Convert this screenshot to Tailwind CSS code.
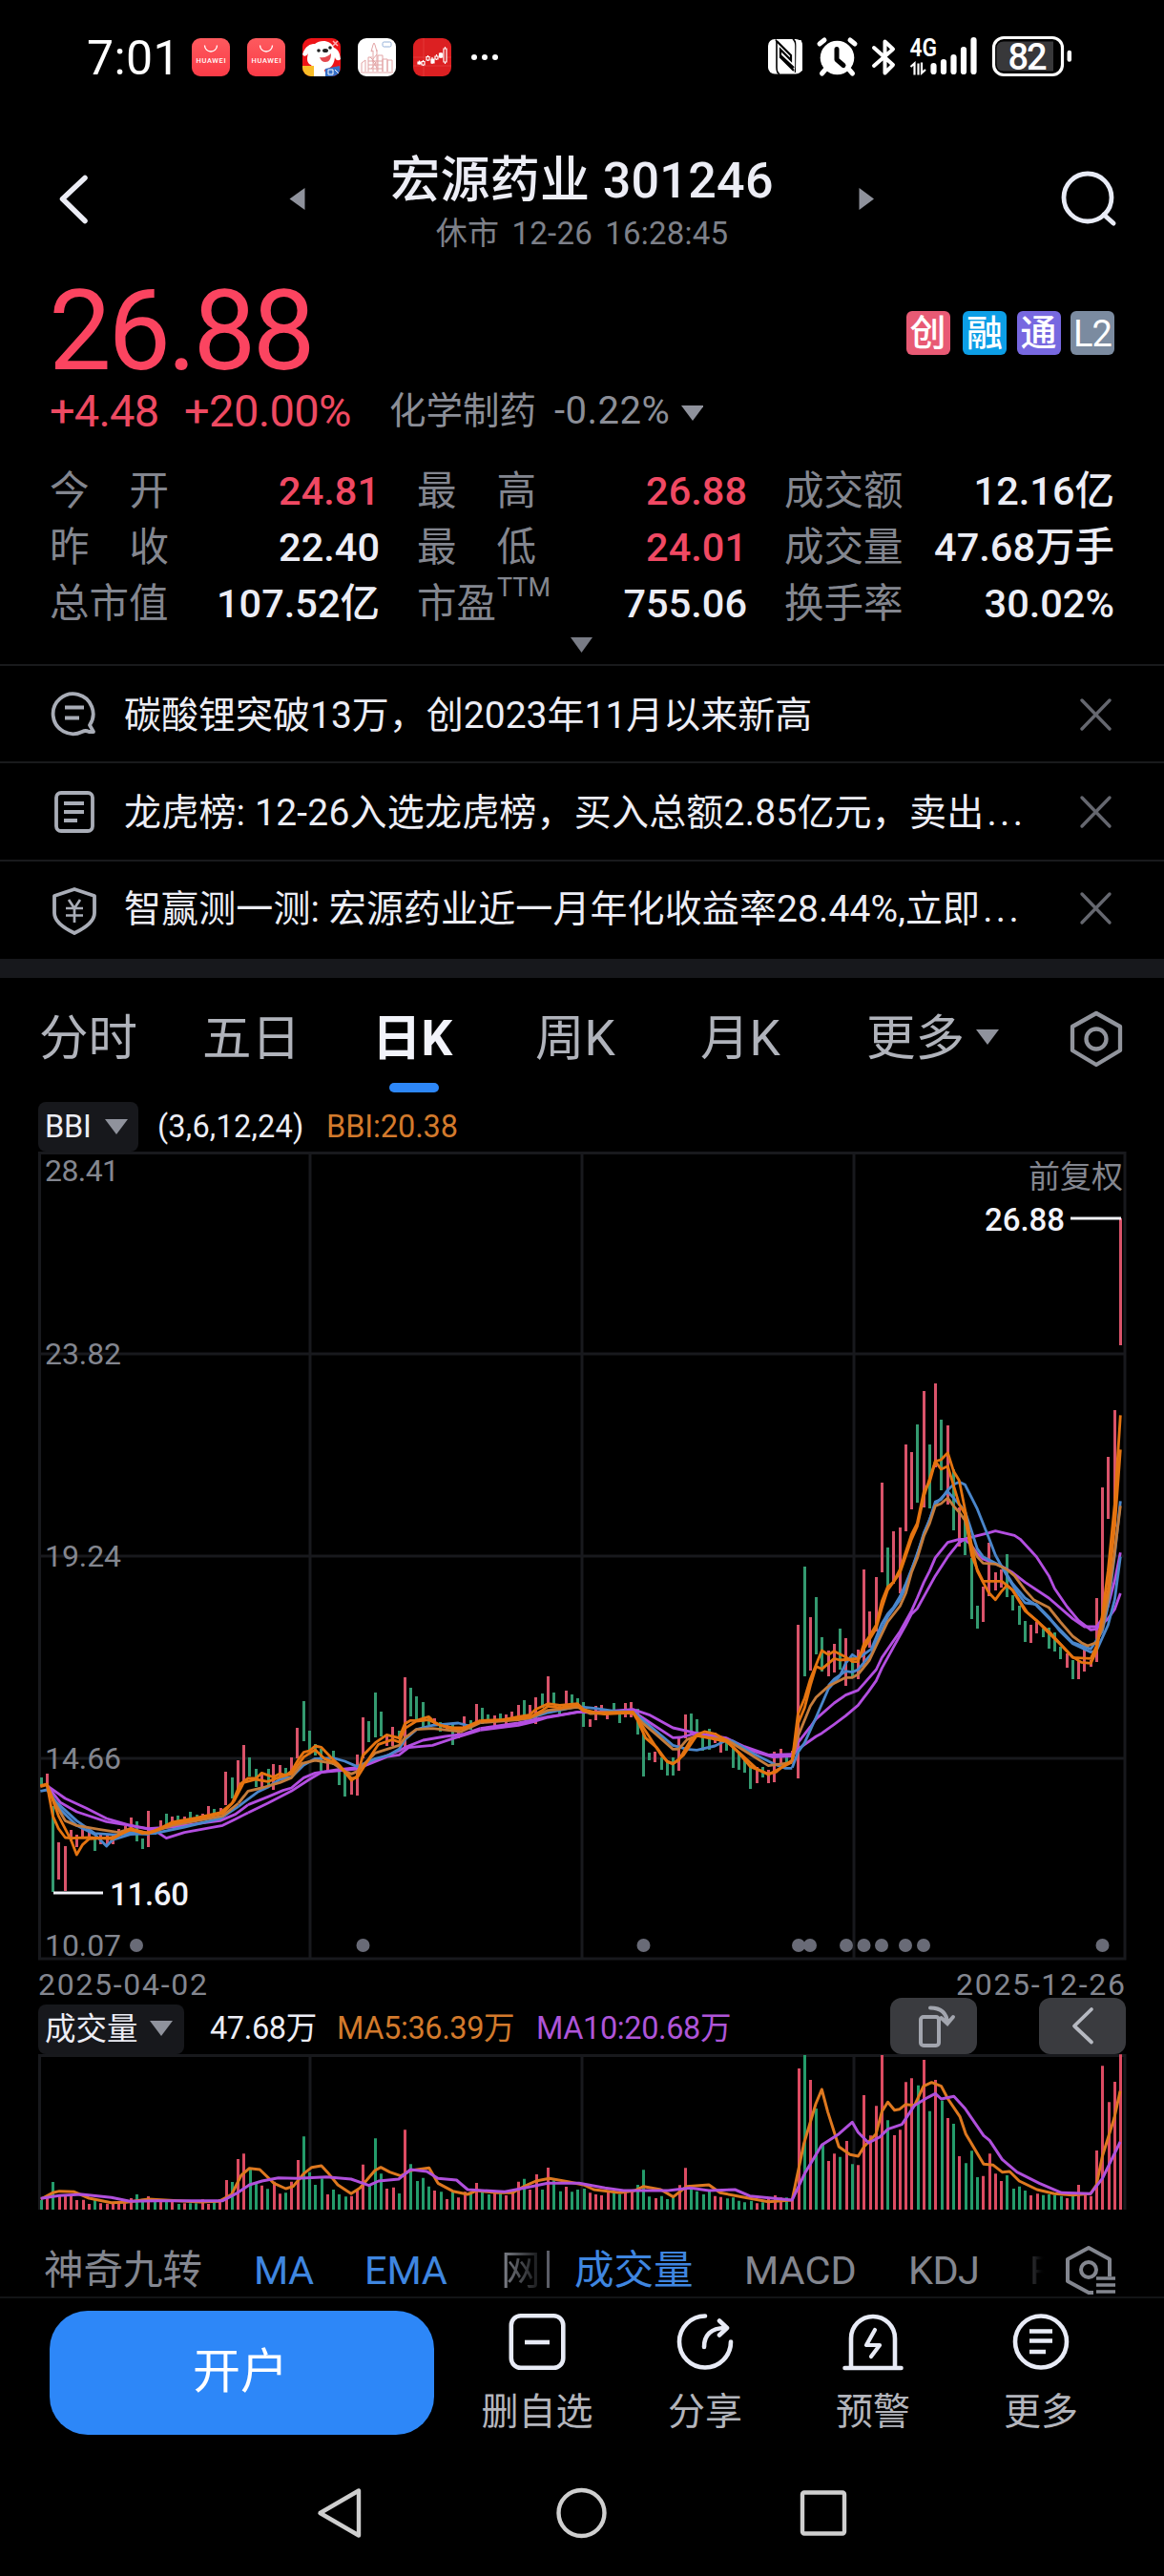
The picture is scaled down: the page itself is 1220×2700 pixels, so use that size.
<!DOCTYPE html>
<html lang="zh-CN">
<head>
<meta charset="utf-8">
<title>宏源药业 301246</title>
<script src="https://cdn.jsdelivr.net/npm/@tailwindcss/browser@4"></script>
</head>
<body class="bg-black">
<div class="w-[1220px] h-[2700px] overflow-hidden bg-black text-[#ecedf5] font-[Roboto,'Noto_Sans_CJK_SC',sans-serif] whitespace-nowrap flex flex-col">

  <!-- status bar -->
  <div class="h-[122px] shrink-0 flex items-center">
    <div class="w-[201px] pl-[91px] text-[50px] leading-[60px] text-white tracking-[.4px]">7:01</div>
    <svg class="w-[1019px] h-[122px]" viewBox="201 0 1019 122">
      <defs>
        <linearGradient id="hw" x1="0" y1="0" x2="0" y2="1"><stop offset="0" stop-color="#fd5a5e"/><stop offset="1" stop-color="#fb3b47"/></linearGradient>
        <clipPath id="jd"><rect x="317" y="40" width="40" height="40" rx="9"/></clipPath>
      </defs>
      <g>
        <rect x="201" y="40" width="40" height="40" rx="9" fill="url(#hw)"/>
        <path d="M214.500 47.500a6.500 6.500 0 0 0 13 0" fill="none" stroke="#fff" stroke-width="1.300"/>
        <text x="221" y="66" font-size="7.500" font-weight="500" fill="#fff" text-anchor="middle" textLength="31">HUAWEI</text>
        <rect x="259" y="40" width="40" height="40" rx="9" fill="url(#hw)"/>
        <path d="M272.500 47.500a6.500 6.500 0 0 0 13 0" fill="none" stroke="#fff" stroke-width="1.300"/>
        <text x="279" y="66" font-size="7.500" font-weight="500" fill="#fff" text-anchor="middle" textLength="31">HUAWEI</text>
      </g>
      <g clip-path="url(#jd)">
        <rect x="317" y="40" width="40" height="40" fill="#ee1418"/>
        <path d="M349 43l5 5M354 43l-5 5" stroke="#ffb0b5" stroke-width="1.500"/>
        <path d="M317 57c3-9 8-11 13-11 6-5 17-4 20 4 5 2 6 6 7 12-2 2-5 2-6-2-1 10-6 12-11 13l2 7h-13c0-6-1-9-3-12-4-1-5-6-3-12-2 3-4 4-6 1z" fill="#fff"/>
        <path d="M335 60c5 1 9-1 12-4 0 6-2 9-6 9-3 0-5-2-6-5z" fill="#e5474d"/>
        <circle cx="334" cy="53" r="1.800" fill="#222"/><circle cx="346" cy="50" r="1.800" fill="#222"/><ellipse cx="341" cy="53" rx="3" ry="2" fill="#222"/>
        <path d="M317 69h12v11h-12z" fill="#f9bd27"/><path d="M341 72l15-3 1 11h-16z" fill="#3670c8"/>
        <path d="M344 73h5v5h-5zM351 73l4 4" fill="none" stroke="#fff" stroke-width="1"/>
      </g>
      <rect x="375" y="40" width="40" height="40" rx="9" fill="#fff"/>
      <g fill="none" stroke="#e3a5a6" stroke-width="1">
        <path d="M391 75V53l-2 1 2-7 1-2 1 2 2 7M395 52v23M386 75V60h4M379 75v-9l4-3v12M396 75V58h5v17M401 75V62h5v13M406 75V63h5v12M378 76h34M386 64h15M386 68h15M386 72h15M388 60l6 6-5 6M395 57l-5 6 5 8"/>
      </g>
      <rect x="401" y="44" width="9" height="5" rx="1.500" fill="none" stroke="#93b0d8" stroke-width="1"/>
      <rect x="433" y="40" width="40" height="40" rx="9" fill="#dc2022"/>
      <path d="M444 40v40M433 69h40M433 60h40" stroke="#e94a4a" stroke-width=".6"/>
      <g stroke="#fff" stroke-width="1.200" fill="none">
        <path d="M439.500 63.500v4M443.500 63v6M448.500 58v6M453 60v7M457.500 57v6M462 55v6M466.500 49v18"/>
        <path d="M438 65h3v2h-3zM452 62h3v4h-3zM460.500 56h3v4h-3z" fill="#fff"/>
        <path d="M442 64.500h3v3.500h-3zM447 59.500h3v3.500h-3zM456 59h3v3h-3zM465 51h3v14h-3z" fill="#dc2022"/>
      </g>
      <g fill="#fff"><circle cx="497" cy="60" r="3"/><circle cx="508" cy="60" r="3"/><circle cx="519" cy="60" r="3"/></g>
      <!-- nfc -->
      <rect x="805" y="41" width="36" height="36.500" rx="7" fill="#fff"/>
      <path d="M813 41.500l1 2v27q0 6 3 7M831 41q3 2 3 7v22l-.5 6" fill="none" stroke="#000" stroke-width="1.600"/>
      <path d="M814 43l15 15v5L818 52v8l14 14M818 58l14 13" fill="none" stroke="#000" stroke-width="2.200"/>
      <path d="M834.600 42l5 0c2 4 1.400 8 1.400 12v20l-5 3h-2z" fill="#fff"/>
      <!-- alarm -->
      <circle cx="877.500" cy="60.500" r="17.800" fill="#fff"/>
      <path d="M859 46l5-4M896 46l-5-4M865 73l-3.500 4M890 73l3.500 4" stroke="#fff" stroke-width="5" stroke-linecap="round"/>
      <path d="M877 51.500v11l7 6" stroke="#000" stroke-width="5" fill="none" stroke-linecap="round" stroke-linejoin="round"/>
      <!-- bluetooth -->
      <path d="M916 50l20 18-8.500 8.500v-33L936 51.500 916 69" fill="none" stroke="#fff" stroke-width="4" stroke-linecap="round" stroke-linejoin="round"/>
      <text x="953.500" y="59" font-size="26" font-weight="600" fill="#fff" textLength="28.500" lengthAdjust="spacingAndGlyphs">4G</text>
      <path d="M954.500 70l4-3.500v12M970 73l-4 3.500v-11M962.500 66.500v12" fill="none" stroke="#fff" stroke-width="2.200"/>
      <path d="M978.500 69v6M989 65v10M999.500 60v15M1010 52v23M1020.500 42v33" stroke="#fff" stroke-width="6.200" stroke-linecap="round"/>
      <rect x="1041.500" y="39.500" width="72" height="39" rx="10.500" fill="#000" stroke="#fff" stroke-width="3.200"/>
      <path d="M1052 43.500h52v31h-52q-7.500 0-7.500-7.500v-16q0-7.500 7.500-7.500z" fill="#38383a"/>
      <text x="1077" y="73" font-size="38" font-weight="500" fill="#fff" text-anchor="middle" textLength="41">82</text>
      <path d="M1120.800 55v7.500" stroke="#fff" stroke-width="4.500" stroke-linecap="round"/>
    </svg>
  </div>

  <!-- title bar -->
  <div class="h-[166px] shrink-0 grid grid-cols-[300px_620px_300px]">
    <svg class="w-[300px] h-[166px]" viewBox="0 122 300 166"><path d="M89 186.500L65.500 208.500 89 231.500" fill="none" stroke="#ecedf5" stroke-width="5.500" stroke-linecap="round" stroke-linejoin="round"/></svg>
    <div class="flex justify-between">
      <svg class="w-[24px] h-[166px]" viewBox="300 122 24 166"><path d="M303.500 208.500L319.500 197v23z" fill="#8f929c"/></svg>
      <div class="flex flex-col items-center pt-[38px]">
        <div class="text-[52px] leading-[60px] font-medium tracking-[.3px]">宏源药业 301246</div>
        <div class="text-[33px] leading-[40px] mt-[5px] text-[#7d8089] tracking-[.2px] [word-spacing:5px]">休市 12-26 16:28:45</div>
      </div>
      <svg class="w-[24px] h-[166px]" viewBox="896 122 24 166"><path d="M916 208.500L900.500 197v23z" fill="#8f929c"/></svg>
    </div>
    <svg class="w-[300px] h-[166px]" viewBox="920 122 300 166"><circle cx="1140" cy="207" r="25" fill="none" stroke="#e8ebf6" stroke-width="4.800"/><path d="M1157 225l10 9" stroke="#e8ebf6" stroke-width="5" stroke-linecap="round"/></svg>
  </div>

  <!-- price -->
  <div class="h-[117px] shrink-0 flex justify-between pl-[51px] pr-[52px]">
    <div class="text-[117px] leading-[118px] text-[#fb4460] tracking-[-3.6px]">26.88</div>
    <div class="flex gap-[10.500px] mt-[38px] text-[38px] leading-[46px] text-white text-center font-medium">
      <div class="w-[46px] h-[46px] rounded-md bg-[#e85a74] mr-[3px]">创</div>
      <div class="w-[46px] h-[46px] rounded-md bg-[#0c9ee6]">融</div>
      <div class="w-[46px] h-[46px] rounded-md bg-[#7768e0]">通</div>
      <div class="w-[46px] h-[46px] rounded-md bg-[#7b8ba0] tracking-[-1px] font-normal leading-[49px]">L2</div>
    </div>
  </div>
  <div class="h-[80px] shrink-0 grid grid-cols-[141px_215px_173px_132px_40px] pl-[52px] text-[40px] leading-[52px] text-[#8b8e97]">
    <div class="text-[47px] text-[#ee4a62] tracking-[-.8px]">+4.48</div>
    <div class="text-[47px] text-[#ee4a62] tracking-[-.6px]">+20.00%</div>
    <div class="text-[38.500px]">化学制药</div>
    <div class="tracking-[.5px]">-0.22%</div>
    <svg class="w-[24px] h-[52px]" viewBox="0 0 24 52"><path d="M1 20h24L13 36z" fill="#8f929c"/></svg>
  </div>

  <!-- statistics -->
  <div class="h-[177px] shrink-0 grid grid-cols-[346px_346px_346px] gap-x-[39px] pl-[52px] text-[41.500px] leading-[59px] font-medium">
    <div class="flex justify-between"><span class="w-[125px] flex justify-between font-normal text-[#83868f]"><span>今</span><span>开</span></span><span class="text-[#f04963]">24.81</span></div>
    <div class="flex justify-between"><span class="w-[125px] flex justify-between font-normal text-[#83868f]"><span>最</span><span>高</span></span><span class="text-[#f04963]">26.88</span></div>
    <div class="flex justify-between"><span class="font-normal text-[#83868f]">成交额</span><span>12.16亿</span></div>
    <div class="flex justify-between"><span class="w-[125px] flex justify-between font-normal text-[#83868f]"><span>昨</span><span>收</span></span><span>22.40</span></div>
    <div class="flex justify-between"><span class="w-[125px] flex justify-between font-normal text-[#83868f]"><span>最</span><span>低</span></span><span class="text-[#f04963]">24.01</span></div>
    <div class="flex justify-between"><span class="font-normal text-[#83868f]">成交量</span><span>47.68万手</span></div>
    <div class="flex justify-between"><span class="font-normal text-[#83868f]">总市值</span><span>107.52亿</span></div>
    <div class="flex justify-between"><span class="font-normal text-[#83868f] flex">市盈<span class="text-[27px] leading-[26px] ml-[1px]">TTM</span></span><span>755.06</span></div>
    <div class="flex justify-between"><span class="font-normal text-[#83868f]">换手率</span><span>30.02%</span></div>
  </div>
  <div class="h-[34px] shrink-0 flex justify-center"><svg class="w-[24px] h-[34px]" viewBox="0 0 24 34"><path d="M0 6h23L11.500 22z" fill="#797c86"/></svg></div>

  <!-- notices -->
  <div class="shrink-0 h-[309px] flex flex-col text-[39px] leading-[52px]">
    <div class="h-[102px] border-t-2 border-[#191a1c] flex items-center pt-[3px]">
      <svg class="w-[130px] h-[60px]" viewBox="0 719 130 60" fill="none" stroke="#a9adb7" stroke-width="3.800" stroke-linecap="round" stroke-linejoin="round"><path d="M98 766l-4-7a21 21 0 1 0-8 7q4-2 7 0z"/><path d="M68 740.500h20M68 751.500h15" stroke-linecap="butt"/></svg>
      <div class="w-[1001px]">碳酸锂突破13万，创2023年11月以来新高</div>
      <svg class="w-[36px] h-[60px]" viewBox="0 0 36 60"><path d="M3 14l29 30M32 14L3 44" stroke="#65676f" stroke-width="3.400" stroke-linecap="round"/></svg>
    </div>
    <div class="h-[103px] border-t-2 border-[#191a1c] flex items-center pt-[3px]">
      <svg class="w-[130px] h-[60px]" viewBox="0 822 130 60" fill="none" stroke="#a9adb7" stroke-width="3.800"><rect x="59" y="831" width="38" height="40" rx="5"/><path d="M67 842h21M67 851h21M67 860h14"/></svg>
      <div class="w-[1001px] tracking-[.2px]">龙虎榜: 12-26入选龙虎榜，买入总额2.85亿元，卖出<span class="tracking-[3.400px] ml-[3px]">...</span></div>
      <svg class="w-[36px] h-[60px]" viewBox="0 0 36 60"><path d="M3 14l29 30M32 14L3 44" stroke="#65676f" stroke-width="3.400" stroke-linecap="round"/></svg>
    </div>
    <div class="h-[104px] border-t-2 border-[#191a1c] flex items-center pb-[3px]">
      <svg class="w-[130px] h-[60px]" viewBox="0 922 130 60" fill="none" stroke="#a9adb7" stroke-width="3.800" stroke-linejoin="round"><path d="M78 931l21 7v18q0 11-21 21-21-10-21-21v-18z"/><path d="M72 942l6 9 6-9M78 951v15M69 951h18M69 958.500h18" stroke-width="2.700"/></svg>
      <div class="w-[1001px] tracking-[.1px]">智赢测一测: 宏源药业近一月年化收益率28.44%,立即<span class="tracking-[3.400px] ml-[3px]">...</span></div>
      <svg class="w-[36px] h-[60px]" viewBox="0 0 36 60"><path d="M3 14l29 30M32 14L3 44" stroke="#65676f" stroke-width="3.400" stroke-linecap="round"/></svg>
    </div>
  </div>
  <div class="h-[20px] shrink-0 bg-[#17181c]"></div>

  <!-- period tabs -->
  <div class="h-[130px] shrink-0 grid grid-cols-[171px_178px_171px_173px_174px_110px_100px_80px] pl-[41px] pt-[34px] text-[51.500px] leading-[60px] text-[#b0b3bb]">
    <div>分时</div><div>五日</div>
    <div class="text-[#f2f3fa] font-bold flex flex-col"><span>日K</span><span class="w-[52px] h-[10px] rounded-full bg-[#2d87f8] mt-[16px] ml-[18px]"></span></div>
    <div>周K</div><div>月K</div><div>更多</div>
    <svg class="w-[30px] h-[60px]" viewBox="1018 1059 30 60"><path d="M1023 1079h24l-12 16z" fill="#8f929c"/></svg>
    <svg class="w-[60px] h-[64px]" viewBox="1118 1059 60 64" fill="none" stroke="#91949c" stroke-width="4.300" stroke-linejoin="round"><path d="M1149 1062l25 14v25l-25 15-25-15v-25z"/><circle cx="1149" cy="1089" r="10.500"/></svg>
  </div>

  <!-- indicator caption -->
  <div class="h-[52px] shrink-0 flex items-center pl-[40px] text-[32.500px] leading-[52px]">
    <div class="w-[105px] h-[52px] rounded-lg bg-[#17181c] flex items-center pl-[7px]"><span class="w-[62px] tracking-[-.3px]">BBI</span><svg class="w-[26px] h-[52px]" viewBox="0 0 26 52"><path d="M1 18h24L13 34z" fill="#8f929c"/></svg></div>
    <div class="ml-[20px] w-[177px] tracking-[.2px]">(3,6,12,24)</div>
    <div class="text-[#d37a2c] tracking-[-.1px]">BBI:20.38</div>
  </div>

  <!-- candlestick chart -->
  <svg id="kline" class="w-[1220px] h-[894px] shrink-0" viewBox="0 1207 1220 894" font-size="32">
    <path d="M41.500 1208.500H1179v844.500H41.500zM325 1209V2053M610 1209V2053M895 1209V2053M42 1419H1179M42 1631H1179M42 1843H1179" fill="none" stroke="#18191d" stroke-width="3"/>
    <g fill="#83868f">
      <text x="47" y="1238" textLength="78">28.41</text><text x="47" y="1430" textLength="80">23.82</text><text x="47" y="1642" textLength="80">19.24</text><text x="47" y="1854" textLength="80">14.66</text><text x="47" y="2050" textLength="80">10.07</text>
      <text x="1177" y="1245" font-size="33" text-anchor="end">前复权</text>
      <text x="40" y="2091" textLength="177">2025-04-02</text><text x="1002" y="2091" textLength="177">2025-12-26</text>
    </g>
    <g id="candles" stroke-width="3" fill="none"></g>
    <g fill="none" stroke-width="8.500" stroke-linejoin="round">
      <g transform="translate(30 1800) scale(.33333)">
        <g stroke="#b34ee0"><polyline points="58,215 115,255 180,285 245,318 320,340 376,350 451,345 527,335 602,325 650,305 690,275"/><polyline points="58,215 100,268 151,297 245,328 320,340 396,355 433,380 490,362 610,340 650,320 690,300"/></g>
        <g stroke="#4a86cb"><polyline points="37,232 58,228 85,265 151,325 208,365 283,370 320,362 376,368"/><polyline points="58,222 100,290 151,340 208,368 245,405 264,385 320,368 396,365 490,345 602,318 660,280"/></g>
        <polyline stroke="#c47c3c" points="58,215 80,265 115,325 151,340 220,352 283,362 320,350 376,365 451,340 530,325 610,310 660,270"/>
        <g stroke="#e57410"><polyline points="37,218 58,212 76,310 94,350 115,378 133,380 190,378 264,382 320,350 358,365 396,358 451,330 527,316 602,300 640,270"/><polyline points="37,215 58,210 94,310 133,385 151,432 170,400 190,382 264,378 320,354 376,364 451,335 530,320 610,302 645,265"/></g>
      </g>
      <g transform="translate(220 1740) scale(.33333)">
        <g stroke="#b34ee0"><polyline points="120,455 182,430 230,410 256,402 295,370 331,355 400,345 463,338 520,315 595,285 613,275 670,252 740,240 800,232 850,215"/><polyline points="120,480 182,450 256,412 313,375 350,353 463,342 560,303 595,298 625,275 700,268 760,248 850,220"/></g>
        <polyline stroke="#4a86cb" points="90,460 150,415 182,400 220,375 256,368 295,330 331,310 388,308 424,318 463,335 520,310 560,300 595,280 613,250 650,218 700,205 781,198 820,208 850,195"/>
        <polyline stroke="#c47c3c" points="90,450 120,412 163,402 220,385 256,370 290,325 331,315 388,325 424,350 445,358 463,350 520,292 595,268 613,245 649,218 700,215 790,225 850,197"/>
        <g stroke="#e57410"><polyline points="70,450 95,390 120,372 145,372 163,355 199,368 220,357 239,362 256,350 280,310 295,290 313,285 331,270 350,274 380,305 406,330 445,378 463,365 481,300 520,260 556,235 595,245 613,200 631,190 649,190 688,178 706,195 724,205 760,212 800,213 850,190"/><polyline points="75,445 106,385 145,375 182,382 220,368 256,358 295,305 331,282 360,310 400,325 445,372 463,370 499,312 530,265 574,250 595,258 613,215 649,192 688,188 724,205 760,215 790,217 850,193"/></g>
      </g>
      <g transform="translate(380 1700) scale(.33333)">
        <g stroke="#b34ee0"><polyline points="370,335 490,318 583,298 620,293 676,283 720,285 850,275 901,292 976,333 1051,350 1144,365 1201,392 1276,418 1351,416"/><polyline points="370,340 490,325 544,312 583,300 676,284 850,280 901,315 976,364 1000,363 1051,350 1144,367 1201,398 1290,425 1351,422"/></g>
        <polyline stroke="#4a86cb" points="370,315 526,303 583,285 676,266 733,272 790,280 850,283 901,325 976,388 1020,400 1051,403 1108,390 1144,372 1165,375 1230,415 1290,445 1330,460 1351,460"/>
        <polyline stroke="#c47c3c" points="370,317 490,308 526,302 583,278 620,275 676,268 715,288 850,285 883,320 925,355 976,400 994,400 1020,370 1051,358 1144,370 1201,405 1276,452 1351,442"/>
        <g stroke="#e57410"><polyline points="370,310 440,308 490,298 526,292 544,275 583,257 620,262 676,257 694,275 733,285 850,283 865,305 901,360 940,420 958,438 976,445 994,435 1033,370 1051,355 1075,345 1108,352 1144,372 1183,412 1219,455 1276,478 1300,472 1320,455 1351,435"/><polyline points="370,313 490,304 526,300 565,278 583,265 620,270 676,263 694,280 760,290 850,285 865,310 890,365 925,395 958,440 976,447 1010,418 1051,357 1144,376 1183,410 1240,462 1276,480 1351,440"/></g>
      </g>
      <g transform="translate(800 1400) scale(.33333)">
        <g stroke="#b34ee0"><polyline points="91,1318 109,1280 148,1230 166,1205 223,1155 259,1130 298,1115 320,1090 355,1050 373,1012 409,960 430,930 466,865 484,825 505,775 523,740 541,698 580,650 616,640 634,640 655,660 673,685 691,702 750,725 784,745 823,775 898,825 973,890 1010,915 1048,915 1066,890 1084,850 1105,770 1123,682"/><polyline points="91,1322 109,1300 166,1260 184,1250 223,1222 259,1195 298,1162 330,1120 355,1085 373,1045 409,980 448,910 466,875 484,858 505,820 541,755 580,695 616,650 640,637 709,620 730,614 790,628 808,640 859,695 898,755 916,795 955,852 991,895 1030,925 1048,922 1084,890 1105,860 1123,810"/></g>
        <g stroke="#4a86cb"><polyline points="91,1358 109,1310 130,1280 166,1200 205,1110 241,1070 259,1030 280,1003 298,1015 340,985 373,905 391,875 409,855 430,820 448,780 484,690 505,620 523,580 541,522 559,515 580,485 598,468 616,460 634,468 673,545 709,635 730,690 766,755 800,810 823,840 859,845 898,885 934,930 973,968 1030,995 1048,990 1084,910 1105,830 1123,695"/><polyline points="205,1100 223,1080 259,1055 280,1058 298,1050 340,1000 391,885 430,830 448,790 505,625 541,530 580,490 634,550 673,670 691,695 750,725 784,780 823,825 859,848 973,965 1030,985 1066,930 1084,850 1105,690 1123,520"/></g>
        <polyline stroke="#c47c3c" points="91,1338 109,1260 148,1165 166,1137 205,1102 259,1075 280,1075 298,1065 334,1020 355,975 391,900 430,850 448,810 466,745 484,700 505,630 523,590 541,535 559,528 580,510 598,535 616,555 634,580 655,660 673,695 691,715 730,718 766,735 790,755 823,800 850,830 898,855 934,900 973,945 1000,965 1020,975 1048,965 1066,920 1084,830 1105,680 1123,535"/>
        <g stroke="#e57410"><polyline points="91,1335 109,1190 130,1140 148,1080 184,990 205,1003 223,992 259,1010 280,1025 298,1025 316,970 334,945 355,910 373,835 391,790 409,775 430,735 448,680 466,625 484,590 505,490 523,460 541,395 559,390 580,368 598,425 616,455 634,545 655,660 673,740 691,775 709,808 730,830 748,805 766,785 784,800 823,865 859,895 898,935 934,970 973,1010 1000,1027 1030,1030 1048,990 1066,880 1084,740 1105,530 1123,250"/><polyline points="91,1335 109,1220 130,1170 148,1100 166,1040 184,1048 223,1015 241,1020 298,1015 316,985 355,920 373,855 391,800 430,745 466,640 484,600 505,505 541,395 559,420 580,410 598,470 616,530 634,560 655,690 673,735 691,772 750,772 784,800 830,870 898,930 973,1012 1030,1015 1048,975 1084,800 1105,600 1123,358"/></g>
      </g>
    </g>
    <g fill="#696b77"><circle cx="143" cy="2039" r="7"/><circle cx="380.500" cy="2039" r="7"/><circle cx="674.500" cy="2039" r="7"/><circle cx="837" cy="2039" r="7"/><circle cx="849" cy="2039" r="7"/><circle cx="887" cy="2039" r="7"/><circle cx="905.500" cy="2039" r="7"/><circle cx="924" cy="2039" r="7"/><circle cx="949" cy="2039" r="7"/><circle cx="968" cy="2039" r="7"/><circle cx="1155.500" cy="2039" r="7"/></g>
    <g fill="#f2f3fa" font-weight="500"><text x="115" y="1997" font-size="33" textLength="83">11.60</text><text x="1032" y="1290" font-size="33" textLength="84">26.88</text></g>
    <path d="M56 1984h52M1122 1277h53" stroke="#f2f3fa" stroke-width="3"/>
  </svg>

  <!-- volume caption -->
  <div class="h-[52px] shrink-0 flex items-end pl-[40px] text-[32.500px] leading-[54px] tracking-[-.4px]">
    <div class="w-[153px] h-[52px] rounded-lg bg-[#17181c] flex items-center pl-[7px]"><span class="w-[109px] tracking-normal">成交量</span><svg class="w-[26px] h-[52px]" viewBox="0 0 26 52"><path d="M1 17h24L13 33z" fill="#8f929c"/></svg></div>
    <div class="ml-[27px] w-[133px]">47.68万</div>
    <div class="w-[209px] text-[#d37a2c]">MA5:36.39万</div>
    <div class="w-[371px] text-[#ae55d8]">MA10:20.68万</div>
    <svg class="w-[91px] h-[59px] rounded-[12px] bg-[#3a3b3f]" viewBox="933 2094 91 59" fill="none" stroke="#a2a5ae" stroke-width="4"><rect x="965" y="2114" width="19" height="30" rx="3"/><path d="M975 2104.500q17 0 18 16M986.500 2115l6.500 6 6-7" stroke-linecap="round"/></svg>
    <svg class="w-[91px] h-[59px] rounded-[12px] bg-[#3a3b3f] ml-[65px]" viewBox="1089 2094 91 59" fill="none" stroke="#b6b9c1" stroke-width="3.800"><path d="M1144 2106l-18 17.500 18 17" stroke-linecap="round" stroke-linejoin="round"/></svg>
  </div>

  <!-- volume chart -->
  <svg class="w-[1220px] h-[185px] shrink-0" viewBox="0 2153 1220 185">
    <path d="M41.500 2316V2154.500H1179V2316M325 2154V2316M610 2154V2316M895 2154V2316" fill="none" stroke="#18191d" stroke-width="3"/>
    <g id="volumes" stroke-width="3" fill="none"></g>
    <g transform="translate(0 2040) scale(.77806 .33333)" fill="none" stroke-width="3" stroke-linejoin="round">
      <polyline vector-effect="non-scaling-stroke" stroke="#de781f" points="55,795 71,775 80,770 100,772 120,792 150,806 170,805 200,795 240,800 270,804 295,802 312,780 325,720 336,698 350,702 369,745 385,762 395,755 409,715 420,695 433,690 441,710 455,750 473,778 485,760 505,705 513,695 525,710 540,722 553,705 578,697 590,745 610,770 630,780 642,768 670,775 690,775 706,755 722,738 740,730 765,740 786,750 800,765 835,775 855,768 867,755 890,765 907,788 925,755 955,750 970,775 1000,788 1035,803 1067,798 1083,620 1099,495 1107,450 1115,520 1130,630 1145,655 1156,660 1164,630 1180,590 1188,520 1196,490 1205,515 1212,512 1220,497 1232,500 1244,440 1255,428 1268,440 1277,480 1293,535 1301,590 1325,685 1338,688 1350,710 1360,708 1373,738 1397,765 1420,778 1445,782 1469,778 1477,750 1485,660 1493,600 1501,540 1509,455"/>
      <polyline vector-effect="non-scaling-stroke" stroke="#b050dc" points="55,793 80,784 110,780 150,790 175,802 210,800 300,800 320,775 336,750 353,738 375,728 400,730 440,725 473,732 497,752 510,738 537,732 553,702 575,708 590,730 615,735 630,765 680,772 710,758 738,745 780,745 815,760 840,768 900,768 930,760 955,768 990,765 1010,785 1067,798 1085,710 1107,625 1130,590 1148,553 1156,585 1170,618 1185,600 1196,575 1215,560 1232,500 1250,475 1260,463 1268,480 1285,472 1300,510 1325,595 1333,610 1350,670 1370,710 1400,745 1430,775 1469,778 1485,730 1509,615"/>
    </g>
  </svg>

  <!-- indicator selector -->
  <div class="h-[71px] shrink-0 border-b-2 border-[#131416] grid grid-cols-[220px_116px_143px_48px_29px_178px_172px_127px_36px_70px] pl-[46px] pt-[14px] text-[41.500px] leading-[56px] text-[#83868f]">
    <div>神奇九转</div><div class="text-[#3f86e0] tracking-[-.6px]">MA</div><div class="text-[#3f86e0] tracking-[-.2px]">EMA</div>
    <div class="w-[44px] overflow-hidden bg-linear-to-r from-[#83868f] to-[#191a1c] to-90% bg-clip-text text-transparent">网</div>
    <div class="w-[3px] h-[39px] mt-[7px] bg-[#5b5d66]"></div>
    <div class="text-[#3f86e0]">成交量</div><div>MACD</div><div class="tracking-[-.6px]">KDJ</div>
    <div class="w-[18px] overflow-hidden bg-linear-to-r from-[#3c3d41] to-black bg-clip-text text-transparent">RSI</div>
    <svg class="w-[56px] h-[56px]" viewBox="1116 2352 56 56" fill="none" stroke="#83868f" stroke-width="4"><path d="M1164 2386v-18l-22-12-22 12v23l22 12h5" stroke-linejoin="round"/><circle cx="1142" cy="2379" r="8"/><path d="M1150 2388h20M1150 2395h20M1150 2402h20" stroke-width="3.600"/></svg>
  </div>

  <!-- action bar -->
  <div class="h-[161px] shrink-0 flex pl-[52px] pt-[13px] text-[39px] text-[#b3b5bc]">
    <div class="w-[403px] h-[130px] rounded-[40px] bg-[#2d87f8] text-[50px] leading-[129px] text-center text-white mr-[20px] pr-[3px]">开户</div>
    <div class="w-[176px] flex flex-col items-center">
      <svg class="w-[64px] h-[64px]" viewBox="0 0 64 64" fill="none" stroke="#e8ebf6" stroke-width="4.600"><rect x="4.800" y="5.300" width="54.500" height="54.500" rx="10"/><path d="M19 33h26"/></svg>
      <span class="leading-[50px] mt-[17px]">删自选</span>
    </div>
    <div class="w-[176px] flex flex-col items-center">
      <svg class="w-[64px] h-[64px]" viewBox="0 0 64 64" fill="none" stroke="#e8ebf6" stroke-width="4.600" stroke-linecap="round" stroke-linejoin="round"><path d="M32 5.500A27 27 0 1 0 59 32.500"/><path d="M31 38c0-12 7-20 22-20"/><path d="M47 10.500l8 7.500-8 7.500"/></svg>
      <span class="leading-[50px] mt-[17px]">分享</span>
    </div>
    <div class="w-[176px] flex flex-col items-center">
      <svg class="w-[64px] h-[64px]" viewBox="0 0 64 64" fill="none" stroke="#e8ebf6" stroke-width="4.600" stroke-linecap="round" stroke-linejoin="round"><path d="M2.500 60h59M9 60V29a23 23 0 0 1 46 0v31"/><path d="M34 20l-9 16h14l-9 12" stroke-width="4.200"/></svg>
      <span class="leading-[50px] mt-[17px]">预警</span>
    </div>
    <div class="w-[176px] flex flex-col items-center">
      <svg class="w-[64px] h-[64px]" viewBox="0 0 64 64" fill="none" stroke="#e8ebf6" stroke-width="4.600"><circle cx="32" cy="32.500" r="27"/><path d="M20 21.500h24M20 31.500h24M20 43h17"/></svg>
      <span class="leading-[50px] mt-[17px]">更多</span>
    </div>
  </div>

  <!-- system navigation -->
  <svg class="w-[1220px] h-[130px] shrink-0" viewBox="0 2570 1220 130" fill="none" stroke="#cfcfcf" stroke-width="4.400" stroke-linejoin="round"><path d="M335.500 2634L376 2610.500v47z"/><circle cx="609.500" cy="2634" r="24"/><rect x="841" y="2612.500" width="44" height="43" rx="2"/></svg>
</div>

<script>
// [x, top, bottom] for every session, split by direction
const up = `49 1859 1872,61 1931 1970,68 1935 1982,74 1918 1930,80 1923 1936,86 1917 1925,93 1918 1925,105 1923 1933,112 1923 1933,118 1923 1933,124 1917 1924,131 1914 1922,137 1905 1917,155 1898 1936,168 1908 1917,180 1904 1912,193 1904 1910,212 1901 1906,218 1893 1903,231 1895 1900,236.5 1857 1892,249.5 1845 1877,255.5 1829 1868,274.5 1860 1873,286.5 1849 1876,293.5 1850 1863,305.5 1842 1860,311.5 1811 1843,343.5 1843 1856,368.5 1863 1881,374.5 1839 1882,380.5 1800 1843,405.5 1818 1830,411.5 1810 1830,424.5 1758 1831,455.5 1801 1808,468.5 1806 1813,480.5 1813 1822,486.5 1799 1812,499.5 1786 1807,518.5 1798 1810,530.5 1797 1808,536.5 1794 1803,543.5 1787 1800,555.5 1787 1800,561.5 1779 1807,574.5 1757 1790,593.5 1772 1788,618.5 1802 1810,624.5 1788 1803,630.5 1787 1795,636.5 1797 1802,655.5 1785 1800,661.5 1784 1800,686.5 1836 1847,711.5 1820 1856,718.5 1797 1822,749.5 1816 1827,755.5 1823 1837,793.5 1852 1869,805.5 1855 1869,811.5 1836 1868,818.5 1833 1850,830.5 1835 1847,836.5 1703 1864,849.5 1695 1751,868.5 1730 1757,874.5 1723 1753,886.5 1717 1767,899.5 1729 1760,905.5 1645 1748,911.5 1689 1727,918.5 1653 1710,924.5 1554 1648,936.5 1605 1660,943.5 1601 1670,949.5 1514 1605,955.5 1522 1582,968.5 1458 1580,980.5 1450 1538,993.5 1494 1577,1005.5 1580 1621,1030.5 1663 1700,1036.5 1617 1673,1043.5 1648 1667,1049.5 1645 1664,1080.5 1703 1722,1086.5 1700 1712,1118.5 1733 1748,1130.5 1740 1760,1136.5 1728 1752,1143.5 1740 1747,1149.5 1675 1742,1155.5 1559 1707,1161.5 1527 1592,1168.5 1478 1600,1174.5 1277 1410`;
const down = `43 1863 1872,55.5 1893 1983,99 1925 1940,143 1909 1930,149 1927 1938,162 1915 1923,174 1901 1912,186 1903 1910,199 1899 1907,206 1902 1907,224 1896 1903,243.5 1863 1885,261.5 1842 1862,268.5 1854 1873,281 1854 1871,299.5 1853 1863,318.5 1783 1825,324.5 1814 1835,330.5 1828 1840,336.5 1833 1856,349.5 1835 1850,355.5 1853 1871,361.5 1858 1883,386.5 1804 1826,393.5 1774 1821,399.5 1794 1820,418.5 1814 1823,430.5 1769 1799,436.5 1778 1805,443.5 1784 1810,449.5 1800 1808,461.5 1805 1815,474.5 1807 1829,493.5 1803 1813,505.5 1790 1807,511.5 1797 1804,524.5 1796 1803,549.5 1782 1800,568.5 1775 1790,580.5 1774 1787,586.5 1787 1797,599.5 1776 1787,605.5 1780 1788,611.5 1784 1810,643.5 1785 1795,649.5 1795 1806,668.5 1791 1818,674.5 1817 1862,680.5 1837 1845,693.5 1842 1855,699.5 1847 1861,705.5 1842 1861,724.5 1796 1817,730.5 1802 1820,736.5 1820 1835,743.5 1812 1834,761.5 1825 1835,768.5 1830 1853,774.5 1838 1855,780.5 1843 1858,786.5 1850 1875,799.5 1852 1863,824.5 1838 1848,843.5 1642 1757,855.5 1674 1734,861.5 1716 1752,880.5 1707 1750,893.5 1737 1758,930.5 1622 1663,961.5 1493 1575,974.5 1514 1581,986.5 1488 1562,999.5 1540 1604,1011.5 1583 1630,1018.5 1633 1697,1024.5 1683 1707,1055.5 1629 1674,1061.5 1672 1688,1068.5 1683 1703,1074.5 1699 1721,1093.5 1707 1716,1099.5 1706 1728,1105.5 1711 1731,1111.5 1726 1739,1124.5 1740 1760`;
// bar heights, three units per pixel
const volume = [30,43,87,43,48,46,30,31,18,33,20,19,20,18,20,36,48,34,42,30,26,27,28,18,20,20,20,32,18,26,33,93,87,159,176,128,86,76,65,88,50,53,88,156,230,118,78,98,48,63,48,41,43,63,142,78,224,113,66,70,51,251,143,90,100,73,60,56,33,56,38,56,53,84,60,48,53,50,45,53,88,97,63,111,63,132,92,58,72,56,63,66,53,48,45,58,53,48,53,58,78,125,41,36,43,33,38,77,131,73,58,48,58,43,40,35,38,28,23,28,20,23,33,45,38,38,30,444,486,408,318,208,153,176,166,216,143,140,360,233,326,486,281,234,251,401,413,391,471,310,408,343,288,270,168,146,185,102,106,176,113,90,108,66,73,60,45,50,46,48,46,43,36,46,78,53,43,186,452,338,402,488];
const RED = '#d9536a', GREEN = '#349a70';
const NS = 'http://www.w3.org/2000/svg';
const parse = s => s.split(',').map(r => r.split(' ').map(Number));
function draw(host, color, d) {
  const p = document.createElementNS(NS, 'path');
  p.setAttribute('stroke', color); p.setAttribute('d', d);
  document.getElementById(host).appendChild(p);
}
const seg = rows => rows.map(([x, a, b]) => `M${x % 1 ? x : x + .5} ${a}V${b}`).join('');
draw('candles', GREEN, seg(parse(down)));
draw('candles', RED, seg(parse(up)));
const falling = new Set(parse(down).map(([x]) => Math.round((x - 43.3) / 6.25)));
const vols = volume.map((v, i) => [Math.floor(43.3 + 6.25 * i) + .5, 2316 - v / 3, 2316]);
draw('volumes', '#249c6b', seg(vols.filter((_, i) => falling.has(i))));
draw('volumes', '#dc4b62', seg(vols.filter((_, i) => !falling.has(i))));
</script>
</body>
</html>
